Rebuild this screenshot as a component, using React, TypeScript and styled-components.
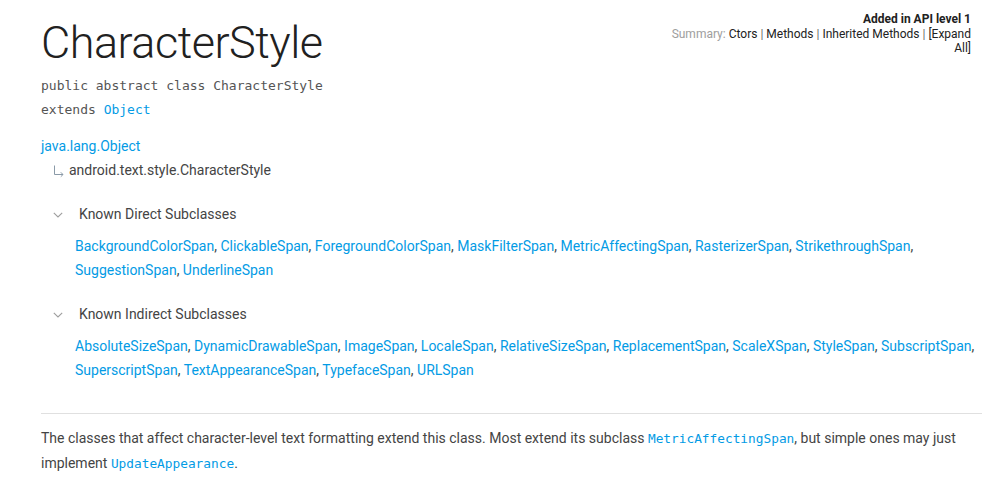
import React from "react";
import styled, { createGlobalStyle } from "styled-components";

const GlobalStyle = createGlobalStyle`
  html, body { margin: 0; padding: 0; background: #fff; }
  body {
    font-family: Roboto, "Noto Sans", Arial, sans-serif;
    font-size: 14px;
    line-height: 24px;
    color: #444;
  }
`;

const Page = styled.div`
  padding: 0 0 0 41px;
  width: 982px;
  box-sizing: border-box;
`;

const Header = styled.header`
  display: flex;
  justify-content: space-between;
  align-items: flex-start;
`;

const Title = styled.h1`
  margin: 20px 0 0;
  font-size: 45px;
  line-height: 46px;
  font-weight: 300;
  color: #212121;
  letter-spacing: -0.5px;
`;

const Summary = styled.div`
  margin-top: 12px;
  margin-right: 11px;
  width: 302px;
  text-align: right;
  font-size: 12px;
  line-height: 14px;
  color: #555;
`;

const ApiLevel = styled.div`
  font-weight: 700;
  color: #212121;
  margin-bottom: 1px;
`;

const SummaryLabel = styled.span`
  color: #9e9e9e;
`;

const SummaryLink = styled.a`
  color: #212121;
  text-decoration: none;
`;

const Sep = styled.span`
  color: #666;
`;

const Signature = styled.div`
  margin-top: 8px;
  font-family: "DejaVu Sans Mono", "Liberation Mono", monospace;
  font-size: 13px;
  line-height: 24px;
  color: #555;
`;

const Link = styled.a`
  color: #039be5;
  text-decoration: none;
`;

const Inheritance = styled.div`
  margin-top: 12px;
`;

const TreeChild = styled.div`
  display: flex;
  align-items: center;
  padding-left: 11px;
  gap: 3px;
  color: #444;
`;

const TreeArrow = styled.svg`
  width: 14px;
  height: 14px;
  margin-top: 2px;
`;

const Section = styled.section`
  margin-top: 20px;
`;

const SectionHead = styled.div`
  display: flex;
  align-items: center;
  padding-left: 12px;
  gap: 16px;
  color: #444;
`;

const Chevron = styled.svg`
  width: 10px;
  height: 6px;
  margin-top: 1px;
`;

const LinkList = styled.div`
  margin-top: 8px;
  padding-left: 34px;
  padding-right: 6px;
`;

const Rule = styled.hr`
  margin: 31px 0 0;
  border: 0;
  border-top: 1px solid #e0e0e0;
  height: 0;
`;

const Para = styled.p`
  margin: 12px 0 0;
  padding-right: 8px;
`;

const Code = styled.code`
  font-family: "DejaVu Sans Mono", "Liberation Mono", monospace;
  font-size: 12.8px;
  color: #039be5;
`;

const direct = [
  "BackgroundColorSpan",
  "ClickableSpan",
  "ForegroundColorSpan",
  "MaskFilterSpan",
  "MetricAffectingSpan",
  "RasterizerSpan",
  "StrikethroughSpan",
  "SuggestionSpan",
  "UnderlineSpan",
];

const indirect = [
  "AbsoluteSizeSpan",
  "DynamicDrawableSpan",
  "ImageSpan",
  "LocaleSpan",
  "RelativeSizeSpan",
  "ReplacementSpan",
  "ScaleXSpan",
  "StyleSpan",
  "SubscriptSpan",
  "SuperscriptSpan",
  "TextAppearanceSpan",
  "TypefaceSpan",
  "URLSpan",
];

const ChevronIcon = () => (
  <Chevron viewBox="0 0 10 6" aria-hidden>
    <path d="M0.8 0.8 L5 5 L9.2 0.8" fill="none" stroke="#9e9e9e" strokeWidth="1.1" />
  </Chevron>
);

const Links: React.FC<{ names: string[] }> = ({ names }) => (
  <LinkList>
    {names.map((n, i) => (
      <React.Fragment key={n}>
        <Link href="#">{n}</Link>
        {i < names.length - 1 ? ", " : ""}
      </React.Fragment>
    ))}
  </LinkList>
);

export default function App() {
  return (
    <>
      <GlobalStyle />
      <Page>
        <Header>
          <Title>CharacterStyle</Title>
          <Summary>
            <ApiLevel>Added in API level 1</ApiLevel>
            <div>
              <SummaryLabel>Summary: </SummaryLabel>
              <SummaryLink href="#">Ctors</SummaryLink> <Sep>|</Sep>{" "}
              <SummaryLink href="#">Methods</SummaryLink> <Sep>|</Sep>{" "}
              <SummaryLink href="#">Inherited Methods</SummaryLink> <Sep>|</Sep>{" "}
              <SummaryLink href="#">[Expand All]</SummaryLink>
            </div>
          </Summary>
        </Header>
        <Signature>
          <div>public abstract class CharacterStyle</div>
          <div>
            extends <Link href="#">Object</Link>
          </div>
        </Signature>
        <Inheritance>
          <div>
            <Link href="#">java.lang.Object</Link>
          </div>
          <TreeChild>
            <TreeArrow viewBox="0 0 14 14" aria-hidden>
              <path
                d="M2.5 1.5 V10.5 H11 M8.8 8.3 L11 10.5 L8.8 12.7"
                fill="none"
                stroke="#8a9aa8"
                strokeWidth="1"
              />
            </TreeArrow>
            <span>android.text.style.CharacterStyle</span>
          </TreeChild>
        </Inheritance>
        <Section>
          <SectionHead>
            <ChevronIcon />
            <span>Known Direct Subclasses</span>
          </SectionHead>
          <Links names={direct} />
        </Section>
        <Section>
          <SectionHead>
            <ChevronIcon />
            <span>Known Indirect Subclasses</span>
          </SectionHead>
          <Links names={indirect} />
        </Section>
        <Rule />
        <Para>
          The classes that affect character-level text formatting extend this class. Most extend its
          subclass <Code>MetricAffectingSpan</Code>, but simple ones may just implement{" "}
          <Code>UpdateAppearance</Code>.
        </Para>
      </Page>
    </>
  );
}
